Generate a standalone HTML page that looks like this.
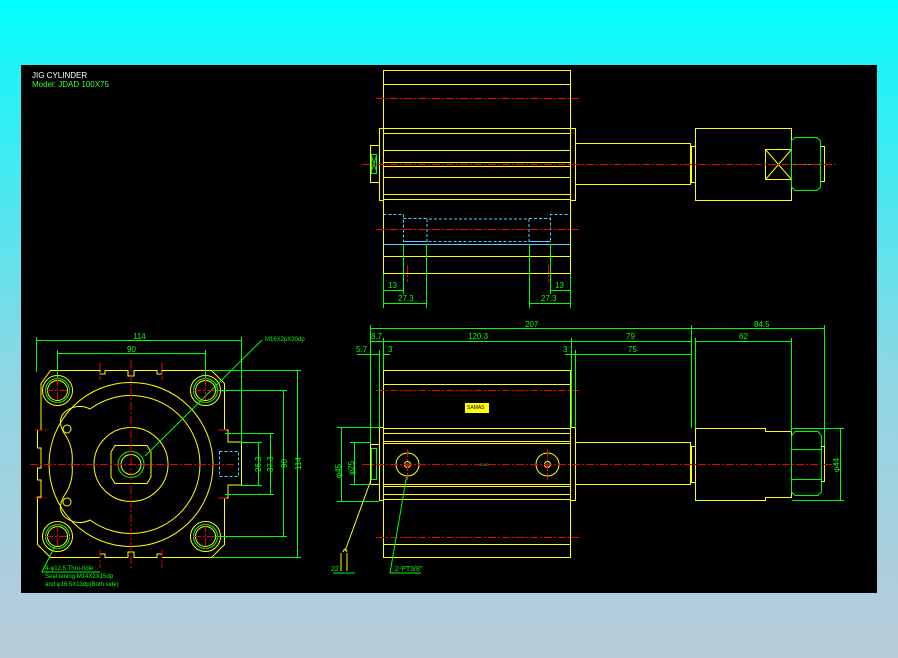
<!DOCTYPE html>
<html><head><meta charset="utf-8"><style>
html,body{margin:0;padding:0;width:898px;height:658px;overflow:hidden;background:linear-gradient(#0ff 0px,#1cf4f8 60px,#8fd6e4 380px,#b9cbd9 658px);}
svg{position:absolute;left:0;top:0}
text{font-family:"Liberation Sans",sans-serif}
</style></head><body>
<svg width="898" height="658" viewBox="0 0 898 658">
<rect x="21" y="65" width="856" height="528" fill="#000"/>
<text x="32" y="78" fill="#fff" font-size="8">JIG CYLINDER</text>
<text x="32" y="87" fill="#3f3" font-size="8">Model: JDAD 100X75</text>

<g fill="none" stroke-width="1">
<g stroke="#ff0" >
<rect x="383.5" y="70.5" width="187" height="203"/>
<path d="M383.5 84.5H570.5M383.5 128.5H570.5M383.5 133.5H570.5M383.5 150.5H570.5M383.5 162.5H570.5M383.5 166.5H570.5M383.5 177.5H570.5M383.5 194.5H570.5M383.5 199.5H570.5M383.5 256.5H570.5"/>
<rect x="379.5" y="128.5" width="4" height="72"/>
<rect x="570.5" y="128.5" width="5" height="72"/>
<path d="M379.5 145.5H370.5V182.5H379.5"/>
<rect x="575.5" y="143.5" width="115" height="41"/>
<rect x="691.5" y="146.5" width="4" height="36"/>
<rect x="695.5" y="128.5" width="96" height="72"/>
<rect x="765.5" y="149.5" width="26" height="30"/>
<path d="M765.5 149.5L791.5 179.5M791.5 149.5L765.5 179.5"/>
<rect x="820.5" y="146.5" width="4" height="35"/>
</g>
<path stroke="#0f0" d="M371.5 154.5h5v19h-5zM371.5 156l5 15M376.5 156l-5 15"/>
<path stroke="#0f0" d="M791.5 140.5L795 137.5H817L820.5 141V187L817 190.5H795L791.5 187Z M791.5 164.5H820.5"/>
<path stroke="#5cf" stroke-dasharray="3 2" d="M383.5 214.5H403.5V241.5H427V219H529V241.5H550.5V214.5H570.5M403.5 218.5H427M529 218.5H550.5M403.5 241.5H550.5"/>
<path stroke="#5cf" d="M383.5 244.5H570.5"/>
<g stroke="#e00" stroke-dasharray="8 2 2 2">
<path d="M376 98.5H579M362 164.5H836M376 229.5H579M407.5 265V282M548.5 265V282"/>
</g>
<g stroke="#0f0">
<path d="M383.5 274V308M403.5 244V294M426.5 244V308M550.5 244V294M570.5 274V308M529.5 244V308"/>
<path d="M383.5 290.5H403.5M383.5 303.5H426.5M550.5 290.5H570.5M529.5 303.5H570.5"/>
</g>
<g fill="#0f0" font-size="8" stroke="none">
<text x="388" y="288">13</text><text x="398" y="301">27.3</text>
<text x="555" y="288">13</text><text x="541" y="301">27.3</text>
</g>

<g stroke="#ff0">
<rect x="383.5" y="370.5" width="187" height="187"/>
<path d="M383.5 384.5H570.5M383.5 428.5H570.5M383.5 433.5H570.5M383.5 441.5H570.5M383.5 443.5H570.5M383.5 484.5H570.5M383.5 486.5H570.5M383.5 494.5H570.5M383.5 499.5H570.5M383.5 544.5H570.5"/>
<rect x="379.5" y="427.5" width="4" height="73"/>
<rect x="570.5" y="427.5" width="5" height="73"/>
<path d="M379.5 444.5H370.5V484.5H379.5"/>
<rect x="575.5" y="442.5" width="115" height="42"/>
<rect x="691.5" y="446.5" width="4" height="36"/>
<path d="M695.5 428.5H765.5V431.5H791.5V497.5H765.5V500.5H695.5Z"/>
<circle cx="407.5" cy="464.5" r="11.5"/><circle cx="547.5" cy="464.5" r="11.5"/>
<circle cx="407.5" cy="464.5" r="3"/><circle cx="547.5" cy="464.5" r="3"/>
<rect x="821.5" y="446.5" width="3" height="35"/>
<path d="M345 551L371 480"/>
<path d="M343 552q2 -6 4 0M341 553v18M347 553v18"/>
</g>
<rect x="465" y="403" width="24" height="10" fill="#ff0"/>
<text x="467" y="409" font-size="5" fill="#000">SAMAS</text>
<text x="479" y="466" font-size="4" fill="#0f0">JDAD</text>
<path stroke="#0f0" d="M791.5 436L795 431.5H818L821.5 436V492L818 495.5H795L791.5 492Z M791.5 449.5H821.5M791.5 479.5H821.5"/>
<path stroke="#0f0" d="M371.5 448.5h5v31h-5z"/>
<g stroke="#e00" stroke-dasharray="8 2 2 2">
<path d="M376 390.5H579M362 464.5H836M376 537.5H579M407.5 449V480M547.5 449V480"/>
</g>
<g stroke="#0f0">
<path d="M370.5 328.5H824.5M370.5 341.5H383.5M383.5 341.5H571.5M571.5 341.5H691.5M695.5 341.5H791.5M357 354.5H379.5M383.5 354.5H390M565 354.5H575.5M575.5 354.5H691.5"/>
<path d="M370.5 325V444M383.5 338V370M379.5 350V428M571.5 338V428M575.5 350V428M691.5 325V428M695.5 338V428M791.5 338V432M824.5 325V446"/>
<path d="M341.5 427.5V501.5M337 427.5H379M337 501.5H379M354.5 442.5V484.5M350 442.5H371M350 484.5H371"/>
<path d="M840.5 428.5V500.5M792 428.5H844M792 500.5H844"/>
<path d="M390 573L406.5 477M390 573H421M333 573H355"/>
</g>
<g fill="#0f0" font-size="8" stroke="none">
<text x="525" y="327">207</text><text x="754" y="327">84.5</text>
<text x="371" y="339">8.7</text><text x="468" y="339">120.3</text><text x="626" y="339">79</text><text x="739" y="339">62</text>
<text x="356" y="352">5.7</text><text x="388" y="352">3</text><text x="563" y="352">3</text><text x="628" y="352">75</text>
<text x="0" y="0" transform="translate(354,475) rotate(-90)">φ25</text>
<text x="0" y="0" transform="translate(341,478) rotate(-90)">φ45</text>
<text x="0" y="0" transform="translate(839,472) rotate(-90)">φ44</text>
<text x="395" y="571" font-size="7">2-PT3/8"</text>
<text x="331" y="571" font-size="7">22</text>
</g>

<g stroke="#ff0">
<path d="M50.5 370.5H100V374H105V370.5H128V376H134V370.5H157V374H162V370.5H211.5L224.5 383.5V430H228V442H241.5V485H228V498H224.5V544.5L211.5 557.5H162V554H157V557.5H134V552H128V557.5H105V554H100V557.5H50.5L37.5 544.5V497H41V480H37.5V468H41V448H37.5V430H41V383.5Z"/>
<circle cx="57.5" cy="390.5" r="15"/><circle cx="205.5" cy="390.5" r="15"/>
<circle cx="57.5" cy="536.5" r="15"/><circle cx="205.5" cy="536.5" r="15"/>
<circle cx="57.5" cy="390.5" r="10"/><circle cx="205.5" cy="390.5" r="10"/>
<circle cx="57.5" cy="536.5" r="10"/><circle cx="205.5" cy="536.5" r="10"/>
<circle cx="131" cy="464.5" r="82"/>
<path d="M90 409A69 69 0 1 1 90 520Q78 526 66 518Q56 510 64 496Q74 482 72 464.5Q74 447 64 433Q56 419 66 411Q78 403 90 409Z"/>
<circle cx="67" cy="429" r="4"/><circle cx="67" cy="502" r="4"/>
<circle cx="131" cy="464.5" r="37"/>
<path d="M115 445.5H147L151 452V477L147 483.5H115L111 477V452Z"/>
<circle cx="131" cy="464.5" r="10"/>
</g>
<g stroke="#0f0">
<circle cx="57.5" cy="390.5" r="12"/><circle cx="205.5" cy="390.5" r="12"/>
<circle cx="57.5" cy="536.5" r="12"/><circle cx="205.5" cy="536.5" r="12"/>
<circle cx="131" cy="464.5" r="13"/>
<path d="M145 456L262 340M55 546L42 572H100"/>
<path d="M36.5 340.5H241.5M36.5 337V372M241.5 337V442M57.5 353.5H205.5M57.5 350V380M205.5 350V380"/>
<path d="M297.5 370.5V557.5M212 370.5H301M212 557.5H301M283.5 390.5V536.5M215 390.5H287M215 536.5H287M270.5 433.5V494.5M225 433.5H274M225 494.5H274M258.5 442.5V485.5M241 442.5H262M241 485.5H262"/>
</g>
<path stroke="#5cf" stroke-dasharray="3 2" d="M219.5 451.5H238.5V476.5H219.5Z"/>
<g stroke="#e00" stroke-dasharray="8 2 2 2">
<path d="M30 464.5H235M131 360V570M45 390.5H70M193 390.5H218M45 536.5H70M193 536.5H218M57.5 378V403M205.5 378V403M57.5 524V549M205.5 524V549M35 430H48M35 498H48M218 430H232M218 498H232M100 362V380M162 362V380M100 550V568M162 550V568"/>
</g>
<g fill="#0f0" font-size="8" stroke="none">
<text x="133" y="339">114</text><text x="127" y="352">90</text>
<text x="265" y="341" font-size="6">M16X2pX20dp</text>
<text x="0" y="0" transform="translate(301,470) rotate(-90)">114</text>
<text x="0" y="0" transform="translate(287,468) rotate(-90)">90</text>
<text x="0" y="0" transform="translate(273,472) rotate(-90)">37.3</text>
<text x="0" y="0" transform="translate(261,472) rotate(-90)">26.3</text>
<text x="45" y="570" font-size="6">4-φ12.5 Thru-hole</text>
<text x="45" y="578" font-size="6">Seal tening  M14X2X15dp</text>
<text x="45" y="586" font-size="6">and φ16.5X13dp(Both side)</text>
</g>
</g>
</svg>
</body></html>
